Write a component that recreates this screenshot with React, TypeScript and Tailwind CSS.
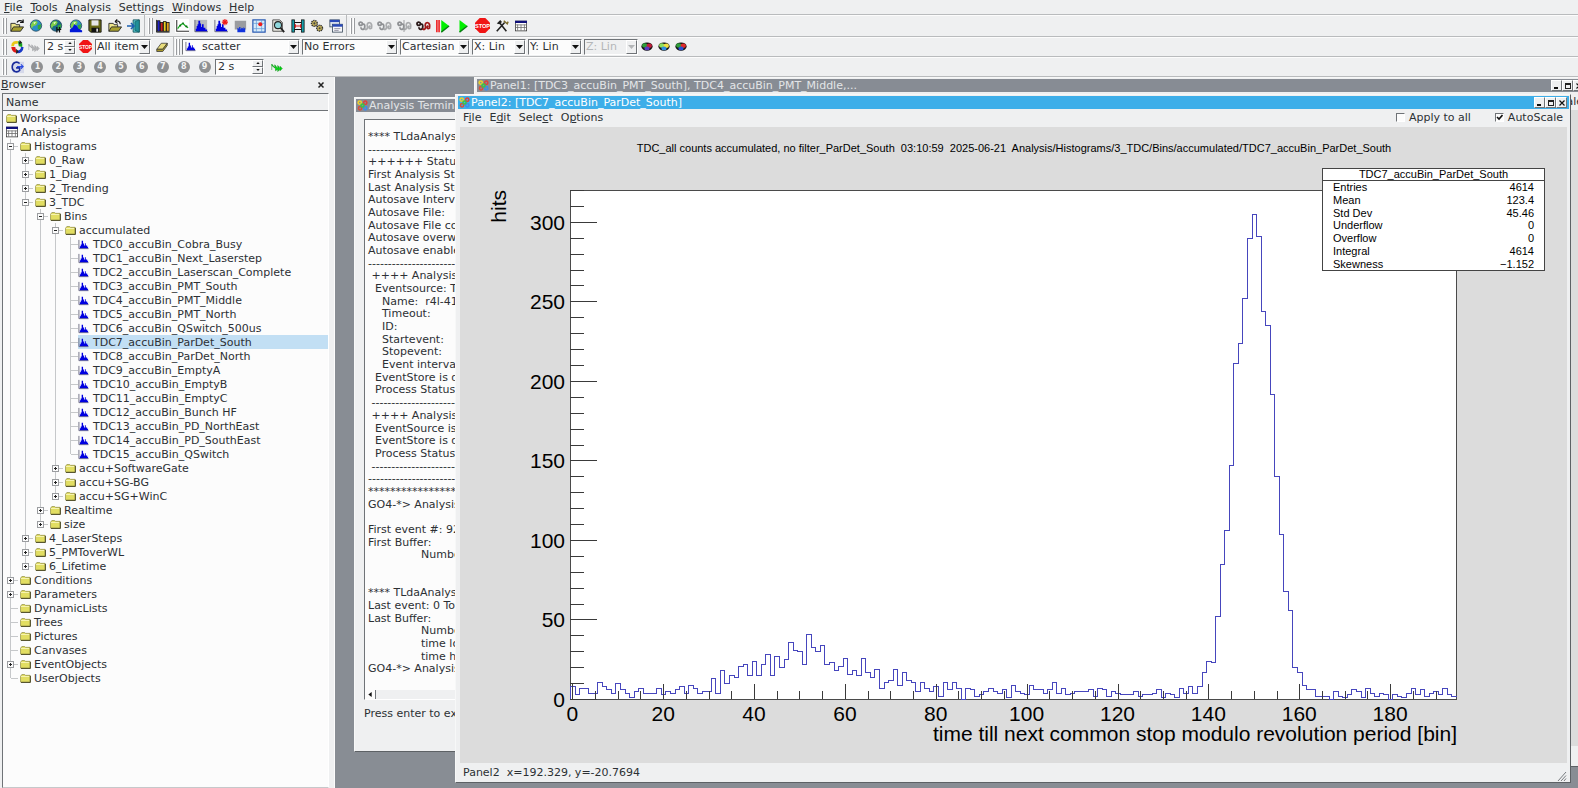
import type { ReactNode } from "react";

/* ---------- icons ---------- */

function Svg({ children, size = "size-3.5" }: { children: ReactNode; size?: string }) {
  return (
    <svg viewBox="0 0 16 16" className={`${size} shrink-0`} aria-hidden="true">
      {children}
    </svg>
  );
}

const HISTO = "M2 14V11H3V8H4V6H5V2H7V5H8V9H9V6H11V10H13V12H15V14Z";

function HistIcon() {
  return (
    <svg viewBox="0 0 12 12" className="h-[11px] w-[11px] shrink-0" aria-hidden="true">
      <path d="M1 1V10.500H11.500" fill="none" stroke="#6b6b80" strokeWidth="1" />
      <path d="M2 10V8H3V6H4V2H5.500V5H6.500V7H7.500V4.500H8.500V7H10V8.500H11V10Z" fill="#0000e0" />
    </svg>
  );
}

function FolderIcon() {
  return (
    <svg viewBox="0 0 12 10" className="h-[9px] w-[11px] shrink-0" aria-hidden="true">
      <path d="M.5 2.500L2 .5H5L6 1.500H11V9H.5Z" fill="#e2de62" stroke="#8f8c45" strokeWidth=".8" />
      <path d="M1 2.800H10" stroke="#fbf9c4" strokeWidth=".9" />
      <path d="M1 9.400H11.500V2" fill="none" stroke="#45431c" strokeWidth="1" />
    </svg>
  );
}

function GridIcon() {
  return (
    <Svg size="size-3">
      <rect x=".5" y="1.500" width="15" height="13" fill="#fff" stroke="#333" />
      <rect x="0" y="1" width="16" height="3" fill="#10107a" />
      <path d="M3.500 6V14M8 6V14M12.500 6V14M1 6.500H15M1 10H15" stroke="#666" strokeWidth="1" />
    </Svg>
  );
}

function WindowIcon() {
  return (
    <Svg size="size-[11px]">
      <circle cx="4" cy="3.800" r="2.400" fill="none" stroke="#ecd02a" strokeWidth="2.200" />
      <circle cx="12" cy="4" r="2.400" fill="none" stroke="#e0413a" strokeWidth="2.200" />
      <circle cx="4.500" cy="12" r="2.400" fill="none" stroke="#d8503a" strokeWidth="2.200" />
      <circle cx="12" cy="12" r="2.400" fill="none" stroke="#3f8be8" strokeWidth="2.200" />
      <circle cx="8" cy="8" r="2.300" fill="none" stroke="#35c649" strokeWidth="2.200" />
    </Svg>
  );
}

function Open({ back = false }: { back?: boolean }) {
  return (
    <Svg>
      <path d="M1 14V5H6L7 6.500H11V9" fill="#eee68a" stroke="#222" />
      <path d="M1 14L4 9H15.500L12 14Z" fill="#a8a030" stroke="#222" />
      {back ? (
        <path d="M14 6C14 2.500 11 1.500 8 3M8 3L10.500 .5M8 3L11 5" fill="none" stroke="#111" strokeWidth="1.300" />
      ) : (
        <path d="M8 4C9 1.500 12 1 14.500 3M15 .5V4H11.500" fill="none" stroke="#111" strokeWidth="1.400" />
      )}
    </Svg>
  );
}

function Globe({ variant = 0 }: { variant?: number }) {
  return (
    <Svg>
      <circle cx="8" cy="7.500" r="6.500" fill={variant === 1 ? "#1c6a8a" : "#2b8fc9"} stroke="#16394d" strokeWidth=".8" />
      <path d="M4 3L8 2L10 4L8 7L5 8L3 11L2 7Z" fill="#7fd04a" />
      <path d="M10 7L14 6L13 11L10 12Z" fill="#35a83c" />
      <path d="M5 4L8 3.500L6 6Z" fill="#f4ffe0" />
      {variant === 1 && <path d="M9 9V15.500M12 9V15.500M9 12H14" stroke="#111" strokeWidth="1.400" />}
      {variant === 2 && <path d="M1 15V12L4 10L6 6L9 8L11 11L15 13V15Z" fill="#0018d8" />}
    </Svg>
  );
}

function Save() {
  return (
    <Svg>
      <path d="M1 1H15V15H3L1 13Z" fill="#6b6b16" stroke="#111" />
      <rect x="4" y="1.500" width="8" height="6" fill="#e7e7e7" />
      <rect x="4" y="10" width="9" height="5" fill="#111" />
      <rect x="9.500" y="11" width="2" height="3.500" fill="#ddd" />
    </Svg>
  );
}

function Exit() {
  return (
    <Svg>
      <path d="M7 1H14V15H7Z" fill="#5ed0d8" stroke="#0e5058" />
      <path d="M9 3L14 1V15L9 13Z" fill="#1f8f98" stroke="#0e5058" strokeWidth=".7" />
      <path d="M0 8H7M4.500 4.500L8 8L4.500 11.500" fill="none" stroke="#1a5fb0" strokeWidth="1.800" />
    </Svg>
  );
}

function Books() {
  return (
    <Svg>
      <rect x="1.500" y="2" width="3" height="12" fill="#2020c8" stroke="#111" strokeWidth=".9" />
      <rect x="5" y="4" width="3" height="10" fill="#d02020" stroke="#111" strokeWidth=".9" />
      <rect x="8.500" y="3" width="3" height="11" fill="#e8d020" stroke="#111" strokeWidth=".9" />
      <rect x="12" y="4" width="3" height="10" fill="#e0a020" stroke="#111" strokeWidth=".9" />
      <path d="M.5 1V15H15.500" fill="none" stroke="#111" />
    </Svg>
  );
}

function Graph() {
  return (
    <Svg>
      <rect width="16" height="16" fill="#fff" />
      <path d="M2 1V14H16" fill="none" stroke="#333" strokeWidth="1.200" />
      <path d="M3 11L6 7L9 5L12 8L15 10" fill="none" stroke="#15b020" strokeWidth="1.400" />
      <path d="M5 6.500H7V8.500H5ZM8.500 4H10V6H8.500ZM12 7.500H14V9.500H12Z" fill="#116618" />
    </Svg>
  );
}

function Histo({ mode = 0 }: { mode?: number }) {
  return (
    <Svg>
      {mode === 1 && <rect x="1" y="1" width="14" height="14" fill="#b9bbbe" />}
      {mode === 3 && <rect x="2" y="2" width="13" height="10" fill="#9a9ca0" />}
      {mode !== 3 && <path d="M1 1V14.500H16" fill="none" stroke="#556" strokeWidth=".9" />}
      {mode === 3 ? (
        <path d="M5 15V10L7 11V9H8.500V12L10 10L12 11V9L14 11V15Z" fill="#1133dd" />
      ) : (
        <path d={HISTO} fill="#0000e0" />
      )}
      {mode === 2 && (
        <path d="M12.500 0V7M9 3.500H16M10 1L15 6M15 1L10 6" stroke="#f01818" strokeWidth="1.300" />
      )}
    </Svg>
  );
}

function Marker() {
  return (
    <Svg>
      <rect x="1" y="1" width="14" height="14" fill="#d8ecfa" stroke="#1d4fae" strokeWidth="1.300" />
      <path d="M5 1V15M11 1V15M1 5H15M1 11H15" stroke="#5f9bd8" strokeWidth=".8" />
      <circle cx="9.500" cy="6" r="2.300" fill="#ee1c1c" />
    </Svg>
  );
}

function Search() {
  return (
    <Svg>
      <path d="M2 1H10L13 4V14H2Z" fill="#e8e8e0" stroke="#333" strokeWidth=".9" />
      <circle cx="8" cy="7" r="4" fill="#8fd8dc" stroke="#222" strokeWidth="1.200" />
      <path d="M11 10L15 15" stroke="#222" strokeWidth="2.200" />
    </Svg>
  );
}

function Film() {
  return (
    <Svg>
      <rect x="1" y="1" width="3" height="14" fill="#159da8" stroke="#111" strokeWidth=".9" />
      <rect x="12" y="1" width="3" height="14" fill="#159da8" stroke="#111" strokeWidth=".9" />
      <path d="M4 4H12M4 12H12" stroke="#111" strokeWidth="1.400" />
      <path d="M5 8H11M5 6V10M11 6V10" stroke="#e02020" strokeWidth="1.400" />
    </Svg>
  );
}

function Gears() {
  return (
    <Svg>
      <circle cx="5" cy="5" r="3.300" fill="#c9b65a" stroke="#333" strokeWidth="1.600" strokeDasharray="1.500 .8" />
      <circle cx="11" cy="10.500" r="3.300" fill="#c9b65a" stroke="#333" strokeWidth="1.600" strokeDasharray="1.500 .8" />
      <circle cx="5" cy="5" r="1.200" fill="#444" />
      <circle cx="11" cy="10.500" r="1.200" fill="#444" />
    </Svg>
  );
}

function Cascade() {
  return (
    <Svg>
      <rect x="1" y="1" width="11" height="8" fill="#dfe6f2" stroke="#345" strokeWidth=".9" />
      <rect x="1" y="1" width="11" height="2.500" fill="#2a49b8" />
      <rect x="4" y="6" width="11.500" height="9" fill="#f6f6fb" stroke="#345" strokeWidth=".9" />
      <rect x="4" y="6" width="11.500" height="2.800" fill="#2a49b8" />
      <path d="M6 11H13M6 13H11" stroke="#889" />
    </Svg>
  );
}

function Chain({ color, split = false }: { color: [string, string]; split?: boolean }) {
  return (
    <svg viewBox="0 0 18 14" className="h-3 w-4 shrink-0" aria-hidden="true">
      <path d="M2 4C2 2 6 2 6 4.500C6 7 2 7 2 4M6 4.500C9 4 9 7 8.500 9.500C7.500 12 4 11 4.500 8.500" fill="none" stroke={color[0]} strokeWidth="2.100" />
      <path d="M8.500 10C10 12 12 11 12 8C11 5 12 3 14 3C17 3 17 7 16.500 9.500C14.500 11 12.500 9 15 6.500" fill="none" stroke={color[1]} strokeWidth="2.100" />
      {split && <path d="M9 0V14" stroke={color[0]} />}
    </svg>
  );
}

function Play({ bars = false }: { bars?: boolean }) {
  return (
    <Svg>
      {bars && <path d="M1 1V15M3.500 1V15" stroke="#ee1010" strokeWidth="1.700" />}
      <path d={bars ? "M6 1L15 8L6 15Z" : "M4 1L13 8L4 15Z"} fill="#00f000" />
      <path d={bars ? "M6 15L15 8" : "M4 15L13 8"} stroke="#0a7a14" strokeWidth="1.500" />
    </Svg>
  );
}

function Stop({ size }: { size?: string }) {
  return (
    <Svg size={size ?? "size-[15px]"}>
      <path d="M5 0H11L16 5V11L11 16H5L0 11V5Z" fill="#f01515" />
      <text x="8" y="10.500" fontSize="6" fontWeight="bold" textAnchor="middle" fill="#fff" fontFamily="Liberation Sans, sans-serif">
        STOP
      </text>
    </Svg>
  );
}

function Hammer() {
  return (
    <Svg>
      <path d="M2 14L11 4M5 4L13 14" stroke="#222" strokeWidth="1.800" />
      <path d="M2 5L6 1L8 3.500L5 6Z" fill="#222" />
      <path d="M10 2L14 5.500L15 3" fill="none" stroke="#7a6a2a" strokeWidth="1.600" />
    </Svg>
  );
}

function Cycle() {
  return (
    <Svg>
      <path d="M3 7C3 3 6 2 9 3" fill="none" stroke="#e8c818" strokeWidth="3.200" />
      <path d="M9 1L14 4L14 8L10 7Z" fill="#16a020" />
      <path d="M14 8C14 12 11 14 8 13.500" fill="none" stroke="#1838c8" strokeWidth="3" />
      <path d="M8 14.500C4 15 2 12 1.500 8L6 8L7 12Z" fill="#e01818" />
      <path d="M7 10L10 13L7 16ZM11 0L14 3L10 5Z" fill="#222" />
    </Svg>
  );
}

function Spring({ color, dark }: { color: string; dark: string }) {
  return (
    <Svg size="size-3">
      <path d="M1 12V4L5 9V5L9 10V6L12 10V7L15 10L12 13V11L9 14V11L6 13V10L1 6" fill={color} stroke={dark} strokeWidth=".7" />
    </Svg>
  );
}

function Eraser() {
  return (
    <Svg size="size-3">
      <path d="M1 11L7 3H15L9 11Z" fill="#e8dc7a" stroke="#333" />
      <path d="M1 11V14H9L15 6V3L9 11Z" fill="#a8982a" stroke="#333" />
    </Svg>
  );
}

function Goto() {
  return (
    <Svg>
      <rect x="3" y="2" width="13" height="13" fill="#d5d9ea" />
      <path d="M11 4C8 1 2.500 2.500 2.500 8C2.500 13.500 8 15 11 12V9H7" fill="none" stroke="#182a9a" strokeWidth="1.800" />
      <path d="M8 7.500H15M12.500 5L15 7.500L12.500 10" fill="none" stroke="#2a4ae0" strokeWidth="1.300" />
    </Svg>
  );
}

function Palette({ colors }: { colors: [string, string, string] }) {
  return (
    <svg viewBox="0 0 16 12" className="h-[9px] w-3 shrink-0" aria-hidden="true">
      <ellipse cx="8" cy="6" rx="7.500" ry="5.500" fill="#111" />
      <ellipse cx="5" cy="4.500" rx="3.500" ry="3" fill={colors[0]} />
      <ellipse cx="11" cy="5" rx="3.500" ry="3" fill={colors[1]} />
      <ellipse cx="8" cy="8.500" rx="3.500" ry="2.500" fill={colors[2]} />
    </svg>
  );
}

/* ---------- small controls ---------- */

function Mnemonic({ label, at }: { label: string; at: number }) {
  return (
    <>
      {label.slice(0, at)}
      <span className="underline underline-offset-1">{label[at]}</span>
      {label.slice(at + 1)}
    </>
  );
}

function Handle() {
  return (
    <span className="flex h-4 shrink-0 gap-px">
      <span className="w-[2px] border-r border-[#9a9c9f] bg-white" />
      <span className="w-[2px] border-r border-[#9a9c9f] bg-white" />
    </span>
  );
}

function Tool({ name, children }: { name: string; children: ReactNode }) {
  return (
    <button type="button" aria-label={name} className="flex flex-1 items-center justify-center">
      {children}
    </button>
  );
}

const SUNKEN = "border border-t-[#6f7377] border-l-[#6f7377] border-r-white border-b-white";
const RAISED = "border border-t-white border-l-white border-r-[#6f7377] border-b-[#6f7377] bg-[#eff0f1]";

function Combo({
  name, value, width, icon, disabled,
}: { name: string; value: string; width: string; icon?: ReactNode; disabled?: boolean }) {
  return (
    <span className={`relative flex h-4 shrink-0 items-center ${width} ${SUNKEN} ${disabled ? "bg-[#eff0f1]" : "bg-[#fcfcfc]"}`}>
      {icon && <span className="pl-0.5">{icon}</span>}
      <select
        aria-label={name}
        disabled={disabled}
        className={`h-full w-full min-w-0 appearance-none bg-transparent leading-[14px] outline-none ${icon ? "pl-[6px]" : "pl-px"} ${disabled ? "text-[#b4b6b8] opacity-100" : ""}`}
      >
        <option>{value}</option>
      </select>
      <span className={`pointer-events-none absolute top-0 right-0 flex h-[14px] w-[11px] items-center justify-center ${RAISED}`}>
        <svg viewBox="0 0 7 4" className="h-[4px] w-[7px]">
          <path d="M0 0H7L3.500 4Z" fill={disabled ? "#b4b6b8" : "#111"} />
        </svg>
      </span>
    </span>
  );
}

function Spin({ name, width }: { name: string; width: string }) {
  return (
    <span className={`flex h-4 shrink-0 bg-[#fcfcfc] ${width} ${SUNKEN}`}>
      <input aria-label={name} defaultValue="2 s" className="w-full min-w-0 bg-transparent pl-[2px] leading-[14px] outline-none" />
      <span className="flex w-[11px] shrink-0 flex-col">
        {["M0 3H5L2.500 0Z", "M0 0H5L2.500 3Z"].map((d) => (
          <button key={d} type="button" aria-label={d.startsWith("M0 3") ? "Increase" : "Decrease"} className={`flex flex-1 items-center justify-center ${RAISED}`}>
            <svg viewBox="0 0 5 3" className="h-[2px] w-[4px]"><path d={d} fill="#111" /></svg>
          </button>
        ))}
      </span>
    </span>
  );
}

/* ---------- browser tree ---------- */

type Kind = "open" | "closed" | "leaf" | "hist" | "root" | "grid";
const TREE: [number, Kind, string][] = [
  [0, "root", "Workspace"],
  [0, "grid", "Analysis"],
  [1, "open", "Histograms"],
  [2, "closed", "0_Raw"],
  [2, "closed", "1_Diag"],
  [2, "closed", "2_Trending"],
  [2, "open", "3_TDC"],
  [3, "open", "Bins"],
  [4, "open", "accumulated"],
  [5, "hist", "TDC0_accuBin_Cobra_Busy"],
  [5, "hist", "TDC1_accuBin_Next_Laserstep"],
  [5, "hist", "TDC2_accuBin_Laserscan_Complete"],
  [5, "hist", "TDC3_accuBin_PMT_South"],
  [5, "hist", "TDC4_accuBin_PMT_Middle"],
  [5, "hist", "TDC5_accuBin_PMT_North"],
  [5, "hist", "TDC6_accuBin_QSwitch_500us"],
  [5, "hist", "TDC7_accuBin_ParDet_South"],
  [5, "hist", "TDC8_accuBin_ParDet_North"],
  [5, "hist", "TDC9_accuBin_EmptyA"],
  [5, "hist", "TDC10_accuBin_EmptyB"],
  [5, "hist", "TDC11_accuBin_EmptyC"],
  [5, "hist", "TDC12_accuBin_Bunch HF"],
  [5, "hist", "TDC13_accuBin_PD_NorthEast"],
  [5, "hist", "TDC14_accuBin_PD_SouthEast"],
  [5, "hist", "TDC15_accuBin_QSwitch"],
  [4, "closed", "accu+SoftwareGate"],
  [4, "closed", "accu+SG-BG"],
  [4, "closed", "accu+SG+WinC"],
  [3, "closed", "Realtime"],
  [3, "closed", "size"],
  [2, "closed", "4_LaserSteps"],
  [2, "closed", "5_PMToverWL"],
  [2, "closed", "6_Lifetime"],
  [1, "closed", "Conditions"],
  [1, "closed", "Parameters"],
  [1, "leaf", "DynamicLists"],
  [1, "leaf", "Trees"],
  [1, "leaf", "Pictures"],
  [1, "leaf", "Canvases"],
  [1, "closed", "EventObjects"],
  [1, "leaf", "UserObjects"],
];

function continues(row: number, depth: number) {
  for (let i = row + 1; i < TREE.length; i++) {
    if (TREE[i][0] === depth) return true;
    if (TREE[i][0] < depth) return false;
  }
  return false;
}

function Guide({ row, depth }: { row: number; depth: number }) {
  const [level, kind] = TREE[row];
  const more = continues(row, depth);
  const own = level === depth;
  return (
    <svg viewBox="0 0 15 14" className="h-3.5 w-[15px] shrink-0" shapeRendering="crispEdges" aria-hidden="true">
      {more && <path d="M7.500 0V14" stroke="#c6c8ca" />}
      {own && !more && <path d="M7.500 0V7" stroke="#c6c8ca" />}
      {own && <path d="M8 7.500H15" stroke="#c6c8ca" />}
      {own && (kind === "open" || kind === "closed") && (
        <>
          <rect x="4.500" y="4.500" width="6" height="6" fill="#fcfcfc" stroke="#9b9da0" />
          <path d={kind === "open" ? "M6 7.500H9" : "M6 7.500H9M7.500 6V9"} stroke="#222" />
        </>
      )}
    </svg>
  );
}

function Tree() {
  return (
    <ul className="flex flex-col">
      {TREE.map(([level, kind, label], row) => {
        const selected = label === "TDC7_accuBin_ParDet_South";
        return (
          <li key={label} className={`flex h-3.5 items-center ${level === 0 ? "pl-px" : ""}`}>
            {Array.from({ length: level }, (_, d) => <Guide key={d} row={row} depth={d + 1} />)}
            <span className={`flex h-3.5 flex-1 items-center ${kind === "hist" ? "gap-1" : "gap-[3px] pl-[2px]"} ${selected ? "bg-[#c2dff4]" : ""}`}>
              {kind === "hist" ? <HistIcon /> : kind === "grid" ? <GridIcon /> : <FolderIcon />}
              <span className="whitespace-pre">{label}</span>
            </span>
          </li>
        );
      })}
    </ul>
  );
}

/* ---------- sub-windows ---------- */

function TitleButton({ name, children }: { name: string; children: ReactNode }) {
  return (
    <button type="button" aria-label={name} className={`flex h-[11px] w-[11px] items-center justify-center ${RAISED}`}>
      <svg viewBox="0 0 8 8" className="h-2 w-2" shapeRendering="crispEdges">{children}</svg>
    </button>
  );
}

function TitleBar({ title, active = false }: { title: string; active?: boolean }) {
  return (
    <header className={`flex h-[13px] shrink-0 items-center gap-px pr-0.5 pl-px leading-3 ${active ? "bg-[#3daee9] text-white" : "bg-[#878c94] text-[#e3e5e7]"}`}>
      <WindowIcon />
      <h2 className="flex-1 whitespace-nowrap">{title}</h2>
      <div className="flex">
        <TitleButton name="Minimize"><path d="M1 5H5V7H1Z" fill="#111" /></TitleButton>
        <TitleButton name="Maximize"><path d="M1.500 1.500H6.500V6.500H1.500ZM1 2.500H7" fill="none" stroke="#222" /></TitleButton>
        <TitleButton name="Close"><path d="M1.500 1.500L6.500 6.500M6.500 1.500L1.500 6.500" stroke="#111" strokeWidth="1.200" shapeRendering="auto" /></TitleButton>
      </div>
    </header>
  );
}

const FRAME = "absolute flex flex-col border border-t-[#f7f8f8] border-l-[#f7f8f8] border-r-[#5d6165] border-b-[#5d6165] bg-[#eff0f1] p-px";

const DASHES = "-".repeat(34);
const TERMINAL = [
  "**** TLdaAnalysis",
  DASHES,
  "++++++ Status",
  "First Analysis Step",
  "Last Analysis Step",
  "Autosave Interval",
  "Autosave File:",
  "Autosave File com",
  "Autosave overwrite",
  "Autosave enabled",
  DASHES,
  " ++++ Analysis",
  "  Eventsource: T",
  "    Name:  r4l-41",
  "    Timeout:",
  "    ID:",
  "    Startevent:",
  "    Stopevent:",
  "    Event interval",
  "  EventStore is d",
  "  Process Status:",
  " " + DASHES,
  " ++++ Analysis",
  "  EventSource is",
  "  EventStore is d",
  "  Process Status:",
  " " + DASHES,
  DASHES,
  "*".repeat(24),
  "GO4-*> Analysis",
  "",
  "First event #: 92",
  "First Buffer:",
  "\tNumber",
  "",
  "",
  "**** TLdaAnalysis",
  "Last event: 0 Tot",
  "Last Buffer:",
  "\tNumber",
  "\ttime low",
  "\ttime high",
  "GO4-*> Analysis",
];

function TerminalWindow() {
  return (
    <section className={`${FRAME} top-5 bottom-9 left-[19px] w-80`}>
      <TitleBar title="Analysis Terminal" />
      <div className={`mx-2 mt-[7px] flex min-h-0 flex-1 flex-col bg-[#fcfcfc] ${SUNKEN}`}>
        <div className="min-h-0 flex-1 overflow-hidden pt-2.5 pl-[3px]">
          <div className="grid h-[545px] auto-rows-fr leading-[13px]">
            {TERMINAL.map((line, i) => (
              <div key={i} className="whitespace-pre [tab-size:53px]">{line}</div>
            ))}
          </div>
        </div>
        <div className="flex h-[9px] shrink-0 bg-[#eff0f1]">
          <button type="button" aria-label="Scroll left" className="flex w-[11px] items-center justify-center border-r border-[#6f7377] bg-[#fcfcfc]">
            <svg viewBox="0 0 4 6" className="h-[5px] w-1"><path d="M4 0V6L0 3Z" fill="#111" /></svg>
          </button>
        </div>
      </div>
      <label className="mx-2 mt-1.5 mb-7 leading-4">Press enter to execute</label>
    </section>
  );
}

/* ---------- histogram ---------- */

const COUNTS = [
  8, 3, 7, 7, 4, 4, 11, 8, 6, 4, 10, 6, 4, 1, 5, 7, 4, 4, 4, 7,
  3, 5, 4, 6, 8, 4, 9, 7, 4, 5, 5, 13, 4, 18, 10, 15, 14, 21, 22, 15,
  24, 15, 22, 28, 15, 27, 20, 25, 36, 31, 30, 22, 41, 33, 30, 34, 22, 23, 18, 21,
  26, 16, 18, 15, 26, 17, 14, 19, 7, 11, 12, 19, 9, 17, 12, 11, 5, 11, 7, 5,
  8, 2, 11, 6, 11, 7, 0, 7, 6, 2, 3, 5, 7, 5, 4, 6, 1, 9, 5, 4,
  3, 9, 6, 6, 4, 6, 11, 4, 7, 3, 4, 5, 5, 5, 6, 2, 7, 6, 2, 5,
  4, 3, 3, 3, 5, 2, 3, 3, 4, 6, 1, 4, 3, 1, 7, 4, 8, 4, 8, 17,
  24, 23, 52, 85, 106, 147, 211, 224, 252, 290, 305, 291, 244, 235, 192, 140, 104, 68, 56, 20,
  17, 9, 6, 6, 2, 2, 2, 0, 5, 2, 1, 3, 6, 5, 1, 7, 4, 2, 4, 3,
  0, 3, 2, 1, 4, 7, 3, 6, 2, 4, 5, 3, 7, 3, 2,
];

const PLOT = { left: 110, right: 996, top: 63, bottom: 572 };
const sx = (v: number) => PLOT.left + ((v + 0.5) * (PLOT.right - PLOT.left)) / 195;
const sy = (v: number) => PLOT.bottom - (v * (PLOT.bottom - PLOT.top)) / 320;

const OUTLINE = COUNTS.reduce(
  (d, c, i) => `${d}V${Math.round(sy(c)) + 0.5}H${Math.round(sx(i + 0.5)) + 0.5}`,
  `M${PLOT.left + 0.5} ${PLOT.bottom + 0.5}`,
);

const X_TICKS = Array.from({ length: 39 }, (_, i) => i * 5);
const Y_TICKS = Array.from({ length: 33 }, (_, i) => i * 10);

function Chart() {
  return (
    <svg viewBox="0 0 1107 636" className="h-full w-full" fontFamily="'Liberation Sans', Arial, sans-serif" fill="#000">
      <rect x={PLOT.left + 0.5} y={PLOT.top + 0.5} width={PLOT.right - PLOT.left} height={PLOT.bottom - PLOT.top} fill="#fff" stroke="#4a4a4a" shapeRendering="crispEdges" />
      <path d={OUTLINE} fill="none" stroke="#4646bd" shapeRendering="crispEdges" />
      <g stroke="#3a3a3a" shapeRendering="crispEdges">
        {Y_TICKS.map((v) => (
          <path key={v} d={`M${PLOT.left} ${Math.round(sy(v)) + 0.5}h${v % 50 === 0 ? 27 : 14}`} />
        ))}
        {X_TICKS.map((v) => (
          <path key={v} d={`M${Math.round(sx(v)) + 0.5} ${PLOT.bottom}v${v % 20 === 0 ? -15 : -8}`} />
        ))}
      </g>
      <g fontSize="21" textAnchor="end">
        {[0, 50, 100, 150, 200, 250, 300].map((v) => (
          <text key={v} x="105" y={sy(v) + 8}>{v}</text>
        ))}
      </g>
      <g fontSize="21" textAnchor="middle">
        {[0, 20, 40, 60, 80, 100, 120, 140, 160, 180].map((v) => (
          <text key={v} x={sx(v)} y="594">{v}</text>
        ))}
      </g>
      <text x="997" y="614" fontSize="21" textAnchor="end">time till next common stop modulo revolution period [bin]</text>
      <text transform="translate(46 63) rotate(-90)" fontSize="21" textAnchor="end">hits</text>
      <text x="554" y="25" fontSize="11" textAnchor="middle" className="whitespace-pre">
        {"TDC_all counts accumulated, no filter_ParDet_South  03:10:59  2025-06-21  Analysis/Histograms/3_TDC/Bins/accumulated/TDC7_accuBin_ParDet_South"}
      </text>
    </svg>
  );
}

const STATS = [
  ["Entries", "4614"],
  ["Mean", "123.4"],
  ["Std Dev", "45.46"],
  ["Underflow", "0"],
  ["Overflow", "0"],
  ["Integral", "4614"],
  ["Skewness", "−1.152"],
];

function StatsBox() {
  return (
    <div className="absolute top-[41px] right-[22px] flex h-[103px] w-[223px] flex-col border border-[#444] bg-white font-['Liberation_Sans',Arial,sans-serif] text-[11px] text-black">
      <div className="h-3 shrink-0 border-b border-[#444] text-center leading-[11px]">TDC7_accuBin_ParDet_South</div>
      <table className="w-full flex-1 leading-3">
        <tbody>
          {STATS.map(([k, v]) => (
            <tr key={k}>
              <th scope="row" className="p-0 pl-2.5 text-left font-normal">{k}</th>
              <td className="p-0 pr-2.5 text-right">{v}</td>
            </tr>
          ))}
        </tbody>
      </table>
    </div>
  );
}

function Check({ label, checked }: { label: string; checked: boolean }) {
  return (
    <label className="flex items-center gap-1">
      <span className={`relative h-[9px] w-[9px] bg-[#fcfcfc] ${SUNKEN}`}>
        <input type="checkbox" defaultChecked={checked} className="peer absolute inset-0 appearance-none" />
        <svg viewBox="0 0 7 7" className="pointer-events-none absolute inset-0 hidden h-[7px] w-[7px] peer-checked:block">
          <path d="M1 3L3 5L6.500 1" fill="none" stroke="#111" strokeWidth="1.600" />
        </svg>
      </span>
      {label}
    </label>
  );
}

function HistogramWindow() {
  return (
    <section className={`${FRAME} top-[17px] right-[7px] bottom-[5px] left-[120px]`}>
      <div className="flex min-h-0 flex-1 flex-col pl-px">
        <TitleBar title="Panel2: [TDC7_accuBin_ParDet_South]" active />
        <div className="flex h-[18px] shrink-0 items-center justify-between pr-1.5 pb-0.5 pl-[5px]">
          <nav className="flex gap-2">
            <button type="button"><Mnemonic label="File" at={1} /></button>
            <button type="button"><Mnemonic label="Edit" at={1} /></button>
            <button type="button"><Mnemonic label="Select" at={4} /></button>
            <button type="button"><Mnemonic label="Options" at={1} /></button>
          </nav>
          <div className="flex gap-6">
            <Check label="Apply to all" checked={false} />
            <Check label="AutoScale" checked />
          </div>
        </div>
        <div className="relative mr-[2px] ml-[2px] min-h-0 flex-1 bg-[#dcdcdc]">
          <Chart />
          <StatsBox />
        </div>
        <footer className="flex h-[18px] shrink-0 items-center justify-between pl-[5px]">
          <span className="whitespace-pre">{"Panel2  x=192.329, y=-20.7694"}</span>
          <svg viewBox="0 0 10 10" className="mr-0.5 h-2.5 w-2.5 self-end" aria-hidden="true">
            <path d="M1 10L9 1M4 10L9 4.500M7 10L9 7.500" stroke="#777b7f" fill="none" />
          </svg>
        </footer>
      </div>
    </section>
  );
}

function BackWindow() {
  return (
    <section className={`${FRAME} top-0 -right-2.5 bottom-[21px] left-[139px]`}>
      <div className="flex flex-1 flex-col pl-px">
        <TitleBar title="Panel1: [TDC3_accuBin_PMT_South], TDC4_accuBin_PMT_Middle,..." />
        <div className="flex h-[18px] shrink-0 items-center justify-end pr-[3px]">AutoScale</div>
        <div className="flex-1 bg-[#dcdcdc]" />
        <div className="h-[19px]" />
      </div>
    </section>
  );
}

/* ---------- main window ---------- */

const GREY: [string, string] = ["#8f9194", "#a9abad"];
const BAR = "flex items-center border-b border-[#b9bbbd] shadow-[0_1px_0_#fcfcfc]";

export default function App() {
  return (
    <div className="flex h-screen flex-col overflow-hidden bg-[#eff0f1] font-['DejaVu_Sans',sans-serif] text-[11px] leading-[13px] text-[#2c3034]">
      <nav className="flex h-[15px] shrink-0 items-center gap-2 border-b border-[#b9bbbd] pl-1 shadow-[0_1px_0_#fcfcfc]">
        <button type="button"><Mnemonic label="File" at={0} /></button>
        <button type="button"><Mnemonic label="Tools" at={0} /></button>
        <button type="button"><Mnemonic label="Analysis" at={0} /></button>
        <button type="button"><Mnemonic label="Settings" at={4} /></button>
        <button type="button"><Mnemonic label="Windows" at={0} /></button>
        <button type="button"><Mnemonic label="Help" at={0} /></button>
      </nav>

      <div className={`h-[22px] shrink-0 pl-0.5 ${BAR}`}>
        <Handle />
        <div className="flex w-[137px]">
          <Tool name="Open file"><Open /></Tool>
          <Tool name="Open remote"><Globe /></Tool>
          <Tool name="Connect HTTP"><Globe variant={1} /></Tool>
          <Tool name="Connect histogram server"><Globe variant={2} /></Tool>
          <Tool name="Save"><Save /></Tool>
          <Tool name="Close files"><Open back /></Tool>
          <Tool name="Exit"><Exit /></Tool>
        </div>
        <span className="mr-[3px] h-full w-px bg-[#b9bbbd]" />
        <Handle />
        <div className="flex w-[193px]">
          <Tool name="View panel"><Books /></Tool>
          <Tool name="Fit panel"><Graph /></Tool>
          <Tool name="Histogram properties"><Histo mode={1} /></Tool>
          <Tool name="New histogram"><Histo mode={2} /></Tool>
          <Tool name="New condition"><Histo mode={3} /></Tool>
          <Tool name="Marker editor"><Marker /></Tool>
          <Tool name="Event information"><Search /></Tool>
          <Tool name="Dynamic lists"><Film /></Tool>
          <Tool name="User GUI"><Gears /></Tool>
          <Tool name="Cascade"><Cascade /></Tool>
        </div>
        <span className="mr-[3px] h-full w-px bg-[#b9bbbd]" />
        <Handle />
        <div className="flex w-[176px]">
          <Tool name="Launch analysis"><Chain color={GREY} /></Tool>
          <Tool name="Connect analysis"><Chain color={GREY} /></Tool>
          <Tool name="Disconnect analysis"><Chain color={GREY} split /></Tool>
          <Tool name="Shutdown analysis"><Chain color={["#2b1a1a", "#a01818"]} /></Tool>
          <Tool name="Submit and start"><Play bars /></Tool>
          <Tool name="Start"><Play /></Tool>
          <Tool name="Stop"><Stop /></Tool>
          <Tool name="Configuration"><Hammer /></Tool>
          <Tool name="Analysis window"><GridIcon /></Tool>
        </div>
      </div>

      <div className={`h-5 shrink-0 gap-px pl-0.5 ${BAR}`}>
        <Handle />
        <div className="flex w-[35px]">
          <Tool name="Refresh"><Cycle /></Tool>
          <Tool name="Monitor"><Spring color="#b4b6b8" dark="#9a9c9f" /></Tool>
        </div>
        <Spin name="Monitoring interval" width="w-8" />
        <button type="button" aria-label="Stop monitoring" className="flex w-[17px] justify-center"><Stop size="size-[13px]" /></button>
        <Combo name="Items" value="All item" width="w-14" />
        <button type="button" aria-label="Clear" className="flex w-5 justify-center"><Eraser /></button>
        <span className="h-full w-px bg-[#b9bbbd]" />
        <Handle />
        <div className="flex gap-[2px] pl-px">
          <Combo name="Draw style" value="scatter" width="w-[118px]" icon={<HistIcon />} />
          <Combo name="Errors" value="No Errors" width="w-24" />
          <Combo name="Coordinates" value="Cartesian" width="w-[70px]" />
          <Combo name="X scale" value="X: Lin" width="w-[54px]" />
          <Combo name="Y scale" value="Y: Lin" width="w-[54px]" />
          <Combo name="Z scale" value="Z: Lin" width="w-[54px]" disabled />
        </div>
        <div className="flex w-[50px]">
          <Tool name="Palette 1"><Palette colors={["#2f9e3a", "#c01f3a", "#5a3ac0"]} /></Tool>
          <Tool name="Palette 2"><Palette colors={["#8fe060", "#f0e040", "#3090e0"]} /></Tool>
          <Tool name="Palette 3"><Palette colors={["#2f9e3a", "#e02a2a", "#2a50d0"]} /></Tool>
        </div>
      </div>

      <div className="flex h-5 shrink-0 items-center border-b border-[#b9bbbd] pl-0.5">
        <Handle />
        <button type="button" aria-label="Go to" className="flex w-5 justify-center"><Goto /></button>
        <div className="flex w-[188px]">
          {[1, 2, 3, 4, 5, 6, 7, 8, 9].map((n) => (
            <button key={n} type="button" className="flex flex-1 items-center justify-center">
              <span className="flex size-3 items-center justify-center rounded-full bg-[#8e9092] text-[8px] leading-3 font-bold text-[#f4f4f4]">{n}</span>
            </button>
          ))}
        </div>
        <Spin name="Step interval" width="w-[49px]" />
        <button type="button" aria-label="Run" className="flex w-[26px] justify-center"><Spring color="#00e010" dark="#0a8a14" /></button>
      </div>

      <div className="flex min-h-0 flex-1">
        <aside className="flex w-[335px] shrink-0 flex-col border-r border-[#fcfcfc]">
          <header className="flex h-4 shrink-0 items-center justify-between pr-[9px] pb-px pl-px">
            <h1><Mnemonic label="Browser" at={0} /></h1>
            <button type="button" aria-label="Close browser">
              <svg viewBox="0 0 8 8" className="size-2"><path d="M1.500 1.500L6.500 6.500M6.500 1.500L1.500 6.500" stroke="#222" strokeWidth="1.500" /></svg>
            </button>
          </header>
          <div className="mr-[5px] ml-[2px] flex min-h-0 flex-1 flex-col overflow-hidden border border-t-[#6f7377] border-r-white border-b-[#c6c8ca] border-l-[#6f7377] bg-[#fcfcfc]">
            <div className="flex h-[17px] shrink-0 items-center border-b border-[#6f7377] bg-[#eff0f1] pl-[3px]">Name</div>
            <Tree />
          </div>
        </aside>
        <main className="relative min-w-0 flex-1 overflow-hidden bg-[#888d94]">
          <BackWindow />
          <TerminalWindow />
          <HistogramWindow />
        </main>
      </div>
    </div>
  );
}
